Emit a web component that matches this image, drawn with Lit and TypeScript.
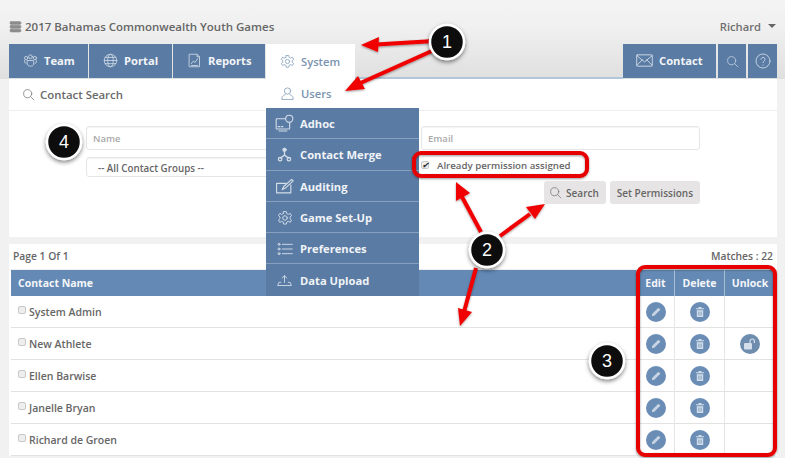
import { LitElement, html, css, svg } from "lit";
import { customElement } from "lit/decorators.js";

const ic = (body: unknown, size = 16, vb = 24) => html`<svg class="ic" width=${size} height=${size} viewBox="0 0 ${vb} ${vb}" fill="none" stroke="currentColor" stroke-width="1.4" stroke-linecap="round" stroke-linejoin="round">${body}</svg>`;

const gear = svg`<circle cx="12" cy="12" r="3.4"/><path d="M10 2.5h4l.7 3 2.4 1.1 2.7-1.5 2 3.4-2.3 2 0 2.6 2.3 2-2 3.4-2.7-1.5-2.4 1.1-.7 3h-4l-.7-3-2.4-1.1-2.7 1.5-2-3.4 2.3-2 0-2.6-2.3-2 2-3.4 2.7 1.5 2.4-1.1z"/>`;
const search = svg`<circle cx="10.5" cy="10.5" r="7.5"/><path d="M16 16l6 6"/>`;
const user = svg`<circle cx="12" cy="8" r="5"/><path d="M9 13c-1 2-6 2.500-6 6v2.500h18V19c0-3.500-5-4-6-6"/>`;
const team = svg`<circle cx="12" cy="6" r="3"/><circle cx="5" cy="8" r="2.600"/><circle cx="19" cy="8" r="2.600"/><path d="M7 12h10v6c0 2-2 3-5 3s-5-1-5-3z"/><path d="M3 11c-1 2-1 5 2 6M21 11c1 2 1 5-2 6"/>`;
const globe = svg`<circle cx="12" cy="12" r="10"/><ellipse cx="12" cy="12" rx="4.500" ry="10"/><path d="M2 12h20M3.500 7h17M3.500 17h17"/>`;
const report = svg`<path d="M4 2h12l4 4v16H4z"/><path d="M16 2v4h4"/><path d="M7 17l3-4 3 2 4-6"/><path d="M7 20h10"/>`;
const mail = svg`<rect x="1" y="4" width="22" height="16" rx="1"/><path d="M1 5l11 9 11-9M1 19l8-8M23 19l-8-8"/>`;
const help = svg`<circle cx="12" cy="12" r="10.500"/><path d="M9 9.500c0-4 6-4 6 0 0 2.500-3 2.500-3 5"/><path d="M12 18v.4"/>`;
const adhoc = svg`<rect x="1.500" y="6" width="17" height="13" rx="1"/><path d="M5 21.500h10M4 16h2M8 16h2"/><circle cx="18" cy="6" r="4.500" fill="#5a7ba3"/>`;
const merge = svg`<circle cx="12" cy="4.500" r="2.800" fill="currentColor"/><path d="M12 7v6M12 13l-7 5M12 13l7 5" stroke-width="2"/><circle cx="5" cy="19.500" r="2.800" stroke-width="2"/><circle cx="19" cy="19.500" r="2.800" stroke-width="2"/>`;
const audit = svg`<path d="M20 10v10H2V8h12"/><path d="M9 16l2-4L21 3l2 2-10 9z"/>`;
const prefs = svg`<circle cx="3" cy="5" r="1.500"/><circle cx="3" cy="12" r="1.500"/><circle cx="3" cy="19" r="1.500"/><path d="M8 5h15M8 12h15M8 19h15"/>`;
const upload = svg`<path d="M12 15V5M8.500 8L12 4l3.500 4"/><path d="M6 15H3l-2 5h22l-2-5h-3"/>`;
const stack = svg`<rect x="2" y="3" width="20" height="5" rx="2" fill="currentColor"/><rect x="2" y="10" width="20" height="5" rx="2" fill="currentColor"/><rect x="2" y="17" width="20" height="5" rx="2" fill="currentColor"/>`;

const pencil = html`<svg width="10" height="10" viewBox="0 0 12 12"><path d="M1 11l.6-3L8.200 1.400a1 1 0 0 1 1.400 0l1 1a1 1 0 0 1 0 1.400L4 10.400z" fill="#c6d4e4"/></svg>`;
const trash = html`<svg width="10" height="12" viewBox="0 0 11 12"><path d="M1 2h9v1H1zM4 .6h3V2H4z" fill="#d3deea"/><path d="M2 4h7v7.500H2z" fill="#d3deea"/><path d="M4 5.500v4.500M5.500 5.500v4.500M7 5.500v4.500" stroke="#6a8db5" stroke-width=".6"/></svg>`;
const lock = html`<svg width="14" height="12" viewBox="0 0 14 12"><path d="M7 5V3.200a2.200 2.200 0 0 1 4.400 0V5" fill="none" stroke="#d3deea" stroke-width="1.200"/><rect x="1" y="5" width="8" height="6.500" rx="1" fill="#d3deea"/></svg>`;

const names = ["System Admin", "New Athlete", "Ellen Barwise", "Janelle Bryan", "Richard de Groen"];
const menu: [string, unknown, number][] = [
  ["Adhoc", adhoc, 19], ["Contact Merge", merge, 15], ["Auditing", audit, 19],
  ["Game Set-Up", gear, 16], ["Preferences", prefs, 16], ["Data Upload", upload, 15],
];

@customElement("app-root")
export class AppRoot extends LitElement {
  static styles = css`
    :host { display: block; position: relative; width: 785px; height: 458px; overflow: hidden; background: #f1f1f1;
      font-family: "Open Sans", sans-serif; font-size: 11px; font-weight: 600; color: #666; }
    .ic { flex: none; display: block; }
    .top { height: 79px; box-sizing: border-box; padding: 18px 8px 0 9px; background: linear-gradient(#f3f3f3, #f0f0f0 35%, #dfdfdf); }
    .title { display: flex; justify-content: space-between; align-items: center; height: 16px; padding-right: 1px; margin-bottom: 10px; }
    .game { display: flex; align-items: center; gap: 3px; font-size: 11.500px; color: #666; }
    .game .ic { color: #8c8c8c; }
    .who { display: flex; align-items: center; gap: 7px; font-size: 11.200px; color: #6f6f6f; }
    .caret { width: 0; height: 0; border: 4px solid transparent; border-top-color: #666; border-bottom: 0; margin-right: 0; }
    .tabs { display: flex; height: 35px; }
    .tab { display: flex; align-items: center; gap: 6px; box-sizing: border-box; background: #5a7ba3; color: #f2f5f8; font-size: 11.200px; font-weight: 700;
      margin-right: 1px; padding: 0 0 1px 14px; height: 34px; }
    .tab .ic { color: #c9d6e4; }
    .team { width: 79px; } .portal { width: 83px; } .reports { width: 92px; }
    .system { width: 89px; height: 35px; background: #fff; color: #7a93b1; font-weight: 600; padding-left: 14px; margin: 0; }
    .system .ic { color: #8ba3be; }
    .rule { flex: 1; height: 34px; border-bottom: 2px solid #b3c5d8; box-sizing: border-box; margin-top: 1px; margin-left: 0; }
    .contact { width: 93px; gap: 6px; padding-left: 13px; }
    .sq { width: 28px; padding: 0; justify-content: center; margin-left: 1px; margin-right: 0; }
    .sq.h { width: 29px; margin-left: 2px; }
    .card { margin: 0 8px 0 9px; background: #fff; }
    .head { height: 32px; box-sizing: border-box; padding-left: 13px; display: flex; align-items: center; gap: 5px; font-size: 11.400px; color: #6a6a6a; border-bottom: 1px solid #eee; }
    .head .ic { color: #777; }
    .form { height: 126px; box-sizing: border-box; padding: 15px 77px 0 77px; display: grid; grid-template-columns: 314px 279px; column-gap: 21px; grid-template-rows: 24px 20px 24px; row-gap: 7px; }
    .input { border: 1px solid #e6e6e6; border-radius: 3px; padding-left: 6px; display: flex; align-items: center; font-size: 9.500px; color: #aaa; background: #fff; box-shadow: inset 0 1px 1px #f4f4f4; }
    .sel { color: #666; font-size: 9.800px; padding: 2px 0 0 11px; }
    .check { display: flex; align-items: center; font-size: 9.700px; gap: 8px; color: #666; padding-bottom: 4px; }
    .box { width: 6px; height: 6px; border: 1px solid #c8c8c8; border-radius: 2px; background: #eee; flex: none; }
    .check .box { color: #333; font-size: 8px; line-height: 6px; text-align: center; overflow: visible; }
    .btns { grid-column: 2; display: flex; justify-content: flex-end; gap: 4px; margin-top: -3px; height: 23px; }
    .btn { display: flex; align-items: center; gap: 4px; background: #e6e4e4; border-radius: 3px; padding: 0 7px 0 5px; font-size: 10px; color: #666; }
    .btn:last-child { padding: 0 7px; }
    .btn .ic { color: #777; }
    .band { height: 7px; background: #f1f1f1; }
    .meta { display: flex; justify-content: space-between; align-items: center; height: 26px; padding: 0 4px 1px 4px; font-size: 10.300px; color: #666; box-sizing: border-box; border-bottom: 1px solid #eee; }
    .table { display: grid; grid-template-columns: 1fr 38px 50px 51px; margin: 0 2px 0 2px; }
    .th { background: #6389b4; color: #f4f6f9; font-weight: 700; font-size: 10.500px; height: 26px; display: flex; align-items: center; justify-content: center; border-left: 1px solid #a9bdd4; }
    .th.first { justify-content: flex-start; padding-left: 7px; border-left: 0; }
    .td { height: 32px; box-sizing: border-box; border-bottom: 1px solid #e2e2e2; border-left: 1px solid #e6e6e6; display: flex; align-items: center; justify-content: center; }
    .td.first { justify-content: flex-start; gap: 3px; padding: 0 0 0 7px; border-left: 0; font-size: 10.500px; color: #666; }
    .td.first .box { margin-top: -3px; }
    .round { width: 20px; height: 20px; border-radius: 50%; background: #6a8db5; display: flex; align-items: center; justify-content: center; }
    .round.l { background: #6e8cae; }
    .drop { position: absolute; left: 266px; top: 79px; width: 153px; }
    .users { height: 29px; display: flex; align-items: center; gap: 6px; padding-left: 14px; background: #fff; color: #7a93b1; font-size: 11.200px; }
    .users .ic { color: #8ba3be; }
    .mi { height: 31.300px; box-sizing: border-box; display: flex; align-items: center; padding-top: 1px; background: #5a7ba3; color: #f0f3f7; font-size: 11.200px; font-weight: 700; border-bottom: 1px solid #86a0bd; }
    .mi:last-child { border-bottom: 0; }
    .mi span { width: 34px; display: flex; justify-content: center; flex: none; color: #d4dee9; padding-left: 3px; box-sizing: border-box; }
    .notes { position: absolute; left: 0; top: 0; }
    .notes text { font-family: "Liberation Sans", sans-serif; font-size: 18px; font-weight: 400; fill: #fff; text-anchor: middle; }
  `;

  render() {
    return html`
      <div class="top">
        <div class="title">
          <div class="game">${ic(stack, 13)}2017 Bahamas Commonwealth Youth Games</div>
          <div class="who">Richard <i class="caret"></i></div>
        </div>
        <div class="tabs">
          <div class="tab team">${ic(team, 15)}Team</div>
          <div class="tab portal">${ic(globe, 15)}Portal</div>
          <div class="tab reports">${ic(report, 15)}Reports</div>
          <div class="tab system">${ic(gear, 15)}System</div>
          <div class="rule"></div>
          <div class="tab contact">${ic(mail, 17)}Contact</div>
          <div class="tab sq">${ic(search, 13)}</div>
          <div class="tab sq h">${ic(help, 16)}</div>
        </div>
      </div>
      <div class="card">
        <div class="head">${ic(search, 13)}Contact Search</div>
        <div class="form">
          <div class="input">Name</div>
          <div class="input">Email</div>
          <div class="input sel">-- All Contact Groups --</div>
          <div class="check"><i class="box">✔</i>Already permission assigned</div>
          <div class="btns">
            <div class="btn">${ic(search, 13)}Search</div>
            <div class="btn">Set Permissions</div>
          </div>
        </div>
        <div class="band"></div>
        <div class="meta"><span>Page 1 Of 1</span><span>Matches : 22</span></div>
        <div class="table">
          <div class="th first">Contact Name</div><div class="th">Edit</div><div class="th">Delete</div><div class="th">Unlock</div>
          ${names.map((n, i) => html`
            <div class="td first"><i class="box"></i>${n}</div>
            <div class="td"><div class="round">${pencil}</div></div>
            <div class="td"><div class="round">${trash}</div></div>
            <div class="td">${i === 1 ? html`<div class="round l">${lock}</div>` : ""}</div>`)}
        </div>
      </div>
      <div class="drop">
        <div class="users">${ic(user, 15)}Users</div>
        ${menu.map(([t, i, s]) => html`<div class="mi"><span>${ic(i, s)}</span>${t}</div>`)}
      </div>
      <svg class="notes" width="785" height="458" viewBox="0 0 785 458" fill="none">
        <defs>
          <filter id="sh" x="-20%" y="-20%" width="140%" height="140%"><feDropShadow dx="0" dy="1" stdDeviation="1" flood-color="#000" flood-opacity=".4"/></filter>
          <filter id="bs" x="-30%" y="-30%" width="160%" height="160%"><feDropShadow dx="0" dy="2" stdDeviation="2" flood-color="#000" flood-opacity=".5"/></filter>
        </defs>
        <g filter="url(#sh)">
          <rect x="414" y="153" width="173" height="23" rx="7" stroke="#e60000" stroke-width="4"/>
          <rect x="638" y="267" width="137" height="188" rx="7" stroke="#e60000" stroke-width="4"/>
          <g stroke="#f00000" stroke-width="4">
            <path d="M434 41L376 44.500"/><path d="M434 50L356 85"/><path d="M481 232L461 195"/><path d="M500 236L530 214"/><path d="M476 268L464 312"/>
          </g>
          <g fill="#f00000">
            <path d="M361 45L379 37L378 52z"/><path d="M345 91L358 76L365 89z"/>
            <path d="M456 182L470 193L456 201z"/><path d="M545 204L535 219L526 207z"/><path d="M460 326L458 308L472 312z"/>
          </g>
        </g>
        <g filter="url(#bs)">
          <circle cx="447" cy="42" r="17" fill="#0a0a0a" stroke="#fff" stroke-width="2.500"/>
          <circle cx="487" cy="250" r="17" fill="#0a0a0a" stroke="#fff" stroke-width="2.500"/>
          <circle cx="607" cy="361" r="17" fill="#0a0a0a" stroke="#fff" stroke-width="2.500"/>
          <circle cx="64" cy="142" r="17" fill="#0a0a0a" stroke="#fff" stroke-width="2.500"/>
        </g>
        <text x="447" y="48">1</text><text x="487" y="256">2</text><text x="607" y="367">3</text><text x="64" y="148">4</text>
      </svg>
    `;
  }
}
